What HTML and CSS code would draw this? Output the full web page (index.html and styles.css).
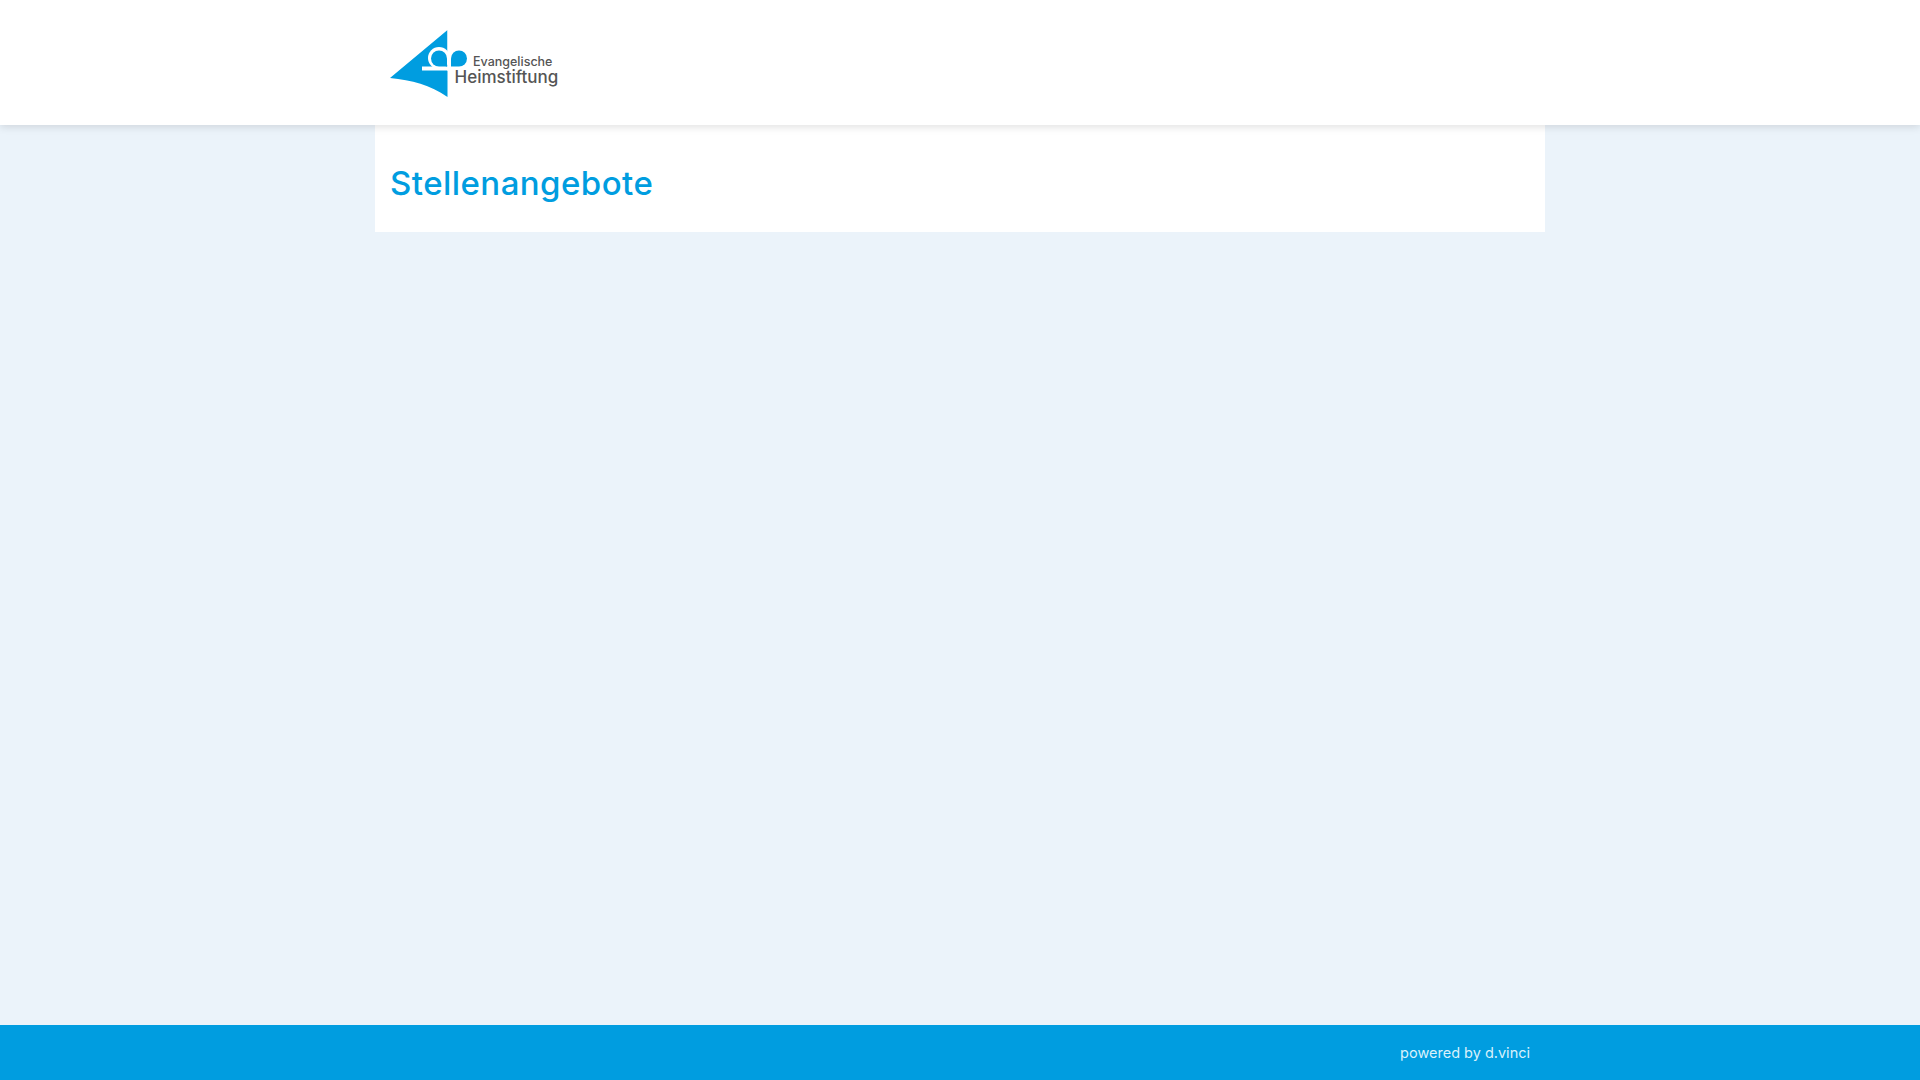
FILE: index.html
```html
<!DOCTYPE html>
<html lang="de">
<head>
<meta charset="utf-8">
<title>Stellenangebote</title>
<link rel="stylesheet" href="styles.css">
</head>
<body>
<header class="site-header">
  <div class="container">
    <svg class="logo" viewBox="0 0 170 75" width="170" height="75" role="img" aria-label="Evangelische Heimstiftung">
      <path class="logo-blue" d="M57.500 5 L0 53 C22 55 40 60 57.500 72 Z"/>
      <circle class="logo-white" cx="49" cy="33" r="11"/>
      <rect class="logo-white" x="32" y="41.500" width="26" height="4"/>
      <rect class="logo-white" x="57.500" y="5" width="5" height="41"/>
      <path class="logo-blue" d="M49 25.500 A8 8 0 0 1 57 33.500 L57 41.500 L49 41.500 A8 8 0 0 1 49 25.500 Z"/>
      <path class="logo-blue" d="M69 25.500 A8 8 0 0 1 69 41.500 L61 41.500 L61 33.500 A8 8 0 0 1 69 25.500 Z"/>
      <text class="logo-small" x="83" y="41">Evangelische</text>
      <text class="logo-large" x="64.500" y="58">Heimstiftung</text>
    </svg>
  </div>
</header>
<main class="content">
  <section class="panel">
    <h1 class="title">Stellenangebote</h1>
  </section>
</main>
<footer class="site-footer">
  <div class="footer-inner">powered by d.vinci</div>
</footer>
</body>
</html>
```

FILE: styles.css
```css
* { box-sizing: border-box; }
html, body { height: 100%; }
body {
  margin: 0;
  display: flex;
  flex-direction: column;
  min-height: 100vh;
  background: #ebf3fa;
  font-family: "Inter", "Open Sans", sans-serif;
}
.site-header {
  height: 125px;
  background: #fff;
  box-shadow: 0 2px 8px rgba(0, 0, 0, .12);
  position: relative;
  z-index: 1;
  flex: none;
}
.container {
  width: 1170px;
  height: 100%;
  margin: 0 auto;
  padding: 0 15px;
  display: flex;
  align-items: center;
}
.logo { display: block; }
.logo-blue { fill: #009de0; }
.logo-white { fill: #fff; }
.logo-small, .logo-large { fill: #555; font-family: "Inter", sans-serif; font-weight: 500; }
.logo-small { font-size: 12.500px; }
.logo-large { font-size: 17px; }
.content { flex: 1; }
.panel {
  width: 1170px;
  height: 107px;
  margin: 0 auto;
  padding: 37px 15px 0;
  background: #fff;
}
.title {
  margin: 0;
  font-size: 33px;
  line-height: 42px;
  font-weight: 500;
  letter-spacing: .45px;
  color: #009de0;
}
.site-footer {
  height: 55px;
  flex: none;
  background: #009de0;
}
.footer-inner {
  width: 1170px;
  height: 100%;
  margin: 0 auto;
  padding: 0 15px;
  display: flex;
  align-items: center;
  justify-content: flex-end;
  font-size: 14.500px;
  color: #d9f1fb;
}
```
